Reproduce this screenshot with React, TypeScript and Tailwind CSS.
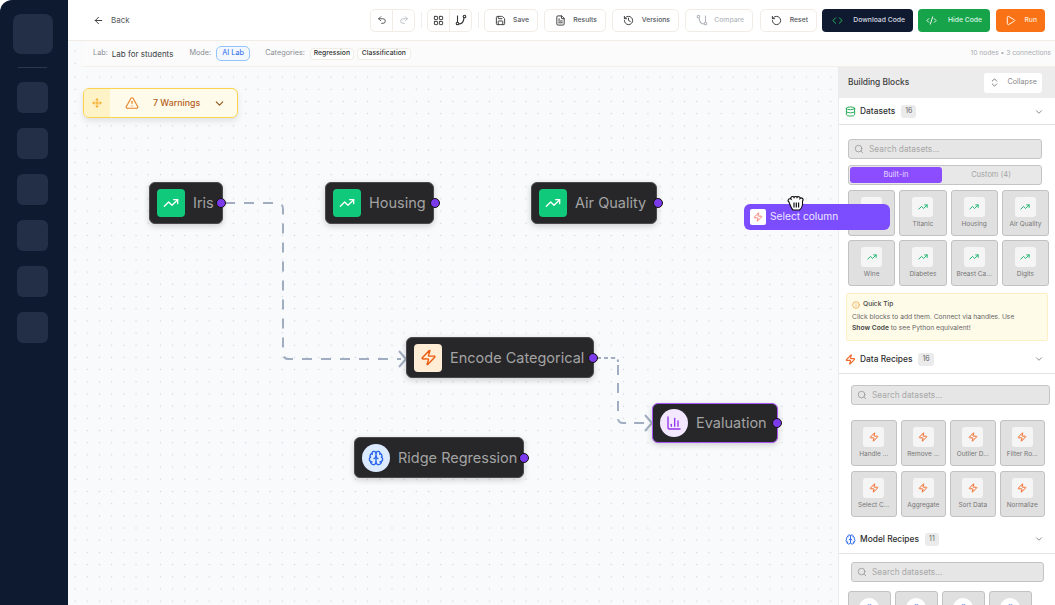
import {
  ArrowLeft, Brain, ChevronDown, ChevronsUpDown, ChartColumn, Code, CodeXml, Database, FileText,
  History, Info, LayoutGrid, Move, Play, Redo2, RotateCcw, Save, Search, TrendingUp, TriangleAlert, Undo2, Zap,
} from "lucide-react";
import type { ReactNode } from "react";

const FONT = "font-['Inter','Liberation_Sans',sans-serif]";
const DOTS = "bg-[#f9fafc] bg-[radial-gradient(#d3d6dc_0.7px,transparent_1px)] bg-[size:12.2px_12.2px] bg-[position:1px_4px]";

function ToolButton({ icon, label, className = "", muted = false }: { icon: ReactNode; label: string; className?: string; muted?: boolean }) {
  return (
    <button className={`h-[23px] flex items-center justify-between pl-[10px] pr-[8px] rounded-[5px] border border-[#f1ece6] bg-white text-[6.8px] font-medium ${muted ? "text-[#b5b8bd]" : "text-[#55585e]"} ${className}`}>
      {icon}
      <span>{label}</span>
    </button>
  );
}

function RouteIcon({ color, className = "" }: { color: string; className?: string }) {
  return (
    <svg width="12" height="12" viewBox="0 0 12 12" fill="none" stroke={color} strokeWidth="1.1" className={className}>
      <circle cx="9.5" cy="2.5" r="1.3" />
      <circle cx="2.5" cy="9.5" r="1.3" />
      <path d="M2.5 1.5 V8.2" />
      <path d="M3.8 10 Q8.5 10 9 3.9" />
    </svg>
  );
}

function Node({ icon, label, className, handle, selected = false }: { icon: ReactNode; label: string; className: string; handle: string; selected?: boolean }) {
  return (
    <div className={`absolute flex items-center gap-2 pl-[7px] rounded-md bg-[#272729] shadow-[0_2px_6px_rgba(0,0,0,0.18)] ${selected ? "border border-[#a855f7]" : "border border-[#4a4a4c]"} ${className}`}>
      {icon}
      <span className="mt-px text-[14.5px] leading-none text-[#a3a3a3] whitespace-nowrap">{label}</span>
      <span className={`absolute top-1/2 -translate-y-1/2 w-[10px] h-[10px] rounded-full bg-[#7c3aed] border border-[#111] ${handle}`} />
    </div>
  );
}

const greenIcon = (
  <span className="w-7 h-7 shrink-0 rounded bg-[#10c97a] flex items-center justify-center">
    <TrendingUp size={16} color="#fff" />
  </span>
);

function Card({ icon, label, hidden = false }: { icon: ReactNode; label: string; hidden?: boolean }) {
  return (
    <div className="h-[46px] rounded-[3px] border border-[#c2c2c2] bg-[#e0e0e0] flex flex-col items-center pt-[6px]">
      <span className="w-[21px] h-[20px] rounded-[3px] bg-[#f5f5f5] flex items-center justify-center">{icon}</span>
      {!hidden && <span className="mt-[2px] text-[6.5px] leading-[11px] text-[#777] whitespace-nowrap">{label}</span>}
    </div>
  );
}

function SearchBox({ className = "" }: { className?: string }) {
  return (
    <div className={`h-5 rounded-[3px] border border-[#c4c4c4] bg-[#e6e6e6] flex items-center gap-[5px] px-[5px] text-[8.3px] text-[#a8a8a8] ${className}`}>
      <Search size={10} color="#999" />
      Search datasets...
    </div>
  );
}

function SectionHead({ icon, label, count, className }: { icon: ReactNode; label: string; count: number; className: string }) {
  return (
    <div className={`flex items-center border-b border-[#e2e2e2] pt-px pl-[6px] pr-[11px] ${className}`}>
      {icon}
      <span className="ml-[4px] text-[8.4px] font-medium text-[#2e2e2e]">{label}</span>
      <span className="ml-[6px] px-[4px] h-[13px] min-w-[14px] flex items-center justify-center rounded-[3px] bg-[#ebebeb] text-[7px] text-[#666]">{count}</span>
      <ChevronDown size={10} color="#777" className="ml-auto" />
    </div>
  );
}

const trend = <TrendingUp size={10} color="#22b573" strokeWidth={2.4} />;
const bolt = <Zap size={10} color="#f26b2a" strokeWidth={2.4} />;

export default function App() {
  return (
    <div className={`h-screen w-full flex overflow-hidden bg-white ${FONT}`}>
      <aside className="w-[68px] shrink-0 bg-[#0e1a2f] rounded-tl-xl flex flex-col items-center pt-[14px] pr-[3px]">
        <div className="w-10 h-10 rounded-lg bg-[#232f46]" />
        <div className="w-[29px] h-px bg-[#2b374c] mt-[13px] mb-[14px]" />
        <div className="flex flex-col gap-[15px]">
          {[0, 1, 2, 3, 4, 5].map((i) => (
            <div key={i} className="w-[31px] h-[31px] rounded-md bg-[#232f46]" />
          ))}
        </div>
      </aside>

      <main className="flex-1 min-w-0 flex flex-col">
        <header className="h-[41px] shrink-0 border-b border-[#f1ece6] flex items-center pl-[25px] pr-[10px]">
          <ArrowLeft size={11} color="#333" />
          <span className="ml-[7px] text-[8px] text-[#55585e]">Back</span>
          <div className="ml-auto flex items-center gap-[6px]">
            <div className="h-[23px] flex rounded-[5px] border border-[#f1ece6]">
              <span className="w-[22px] flex items-center justify-center border-r border-[#f1ece6]"><Undo2 size={10} color="#444" /></span>
              <span className="w-[21px] flex items-center justify-center"><Redo2 size={10} color="#b5b8bd" /></span>
            </div>
            <div className="w-px h-4 bg-[#eeeeee] mx-[-0.5px]" />
            <div className="h-[23px] flex rounded-[5px] border border-[#f1ece6]">
              <span className="w-[22px] flex items-center justify-center border-r border-[#f1ece6]"><LayoutGrid size={11} color="#333" /></span>
              <span className="w-[21px] flex items-center justify-center"><RouteIcon color="#333" /></span>
            </div>
            <div className="w-px h-4 bg-[#eeeeee] mx-[-0.5px]" />
            <ToolButton icon={<Save size={11} color="#333" />} label="Save" className="w-[54px]" />
            <ToolButton icon={<FileText size={11} color="#333" />} label="Results" className="w-[62px]" />
            <ToolButton icon={<History size={11} color="#333" />} label="Versions" className="w-[67px]" />
            <ToolButton icon={<RouteIcon color="#b5b8bd" className="-scale-x-100" />} label="Compare" className="w-[68px]" muted />
            <ToolButton icon={<RotateCcw size={11} color="#333" />} label="Reset" className="w-[57px] ml-px" />
            <button className="w-[91px] h-[23px] -ml-px flex items-center justify-between pl-[10px] pr-[8px] rounded-[4px] bg-[#0f1a30] text-[6.8px] font-medium text-[#d7dbe2]">
              <Code size={11} color="#22c55e" /> Download Code
            </button>
            <button className="w-[72px] h-[23px] -ml-px flex items-center justify-between pl-[8px] pr-[8px] rounded-[4px] bg-[#16a34a] text-[6.8px] font-medium text-[#d7f5e2]">
              <CodeXml size={11} color="#fff" /> Hide Code
            </button>
            <button className="w-[49px] h-[23px] flex items-center justify-between pl-[9px] pr-[8px] rounded-[4px] bg-[#f97316] text-[6.8px] font-medium text-[#ffe9d6]">
              <Play size={11} color="#fff" /> Run
            </button>
          </div>
        </header>

        <div className={`h-[26px] shrink-0 ${DOTS}`}>
          <div className="h-full ml-[14px] pl-[11px] pr-1 flex items-center bg-[#fbfbfc] border-b border-[#f4efe9] text-[7.3px] text-[#8a8d92]">
            <span>Lab:</span>
            <span className="ml-[4px] text-[8px] text-[#3a3d42]">Lab for students</span>
            <span className="ml-4">Mode:</span>
            <span className="ml-[5px] w-[34px] h-[15px] flex items-center justify-center rounded-[5px] border border-[#93c5fd] bg-[#f3f8ff] text-[#2563eb]">AI Lab</span>
            <span className="ml-[15px]">Categories:</span>
            <span className="ml-[5px] w-[44px] h-[12px] flex items-center justify-center rounded-[4px] border border-[#f1ece6] bg-white text-[#333] font-medium text-[6.8px]">Regression</span>
            <span className="ml-[3px] w-[54px] h-[12px] flex items-center justify-center rounded-[4px] border border-[#f1ece6] bg-white text-[#333] font-medium text-[6.8px]">Classification</span>
            <span className="ml-auto text-[6.7px] text-[#a9acb1]">10 nodes • 3 connections</span>
          </div>
        </div>

        <div className="flex-1 min-h-0 flex relative">
          <section className={`relative w-[770px] shrink-0 ${DOTS}`}>
            <div className="absolute left-[15px] top-[21px] w-[155px] h-[30px] rounded-md border border-[#fcd34d] bg-[#fffbeb] shadow-[0_3px_6px_rgba(0,0,0,0.1)] flex items-center overflow-hidden">
              <span className="w-[26px] h-full bg-[#fef3c7] flex items-center justify-center"><Move size={10} color="#f59e0b" /></span>
              <TriangleAlert size={14} color="#e8842a" className="ml-[15px]" />
              <span className="ml-[14px] -mt-px text-[8.8px] font-medium text-[#b45f1b]">7 Warnings</span>
              <ChevronDown size={13} color="#92561c" className="ml-[13px]" />
            </div>

            <svg className="absolute inset-0 w-full h-full" fill="none" stroke="#a1aec1" strokeWidth="2">
              <path d="M157 136 H209 Q215 136 215 142 V286 Q215 292 221 292 H333" strokeDasharray="10 9" />
              <path d="M331 284 L338 292 L331 300" />
              <path d="M529 291 H546 Q550 291 550 295" strokeDasharray="4 3" />
              <path d="M550 298 V351 Q550 356 555 356 H581" strokeDasharray="10 8" />
              <path d="M577 348 L584 356 L577 364" />
            </svg>

            <Node className="left-[81px] top-[115px] w-[74px] h-[42px]" handle="-right-[3.5px]" icon={greenIcon} label="Iris" />
            <Node className="left-[257px] top-[115px] w-[109px] h-[42px]" handle="-right-[7.3px]" icon={greenIcon} label="Housing" />
            <Node className="left-[463px] top-[115px] w-[126px] h-[42px]" handle="-right-[7px]" icon={greenIcon} label="Air Quality" />
            <Node
              className="left-[338px] top-[270px] w-[188px] h-[41px]"
              handle="-right-[4.7px]"
              icon={<span className="w-7 h-7 shrink-0 rounded bg-[#ffedd5] flex items-center justify-center"><Zap size={17} color="#ea580c" /></span>}
              label="Encode Categorical"
            />
            <Node
              selected
              className="left-[584px] top-[336px] w-[126px] h-[40px]"
              handle="-right-[5.3px]"
              icon={<span className="w-7 h-7 shrink-0 rounded-full bg-[#f3e8ff] flex items-center justify-center"><ChartColumn size={16} color="#9333ea" /></span>}
              label="Evaluation"
            />
            <Node
              className="left-[286px] top-[370px] w-[170px] h-[41px]"
              handle="-right-[6px]"
              icon={<span className="w-7 h-7 shrink-0 rounded-full bg-[#dbeafe] flex items-center justify-center"><Brain size={16} color="#2563eb" /></span>}
              label="Ridge Regression"
            />
          </section>

          <aside className="w-[217px] shrink-0 bg-white border-l border-[#ececec] overflow-hidden">
            <div className="h-[31px] bg-[#ececec] flex items-center justify-between pl-[9px] pr-[13px]">
              <span className="text-[8.4px] font-medium text-[#3d3d3d]">Building Blocks</span>
              <span className="w-[58px] h-5 rounded-[3px] bg-white flex items-center justify-between pl-[5px] pr-[5px] text-[7.2px] text-[#8a8a8a]">
                <ChevronsUpDown size={11} color="#777" /> Collapse
              </span>
            </div>

            <SectionHead className="h-[27px]" icon={<Database size={11} color="#16a34a" />} label="Datasets" count={16} />
            <div className="pl-[9px] pr-[6px] pt-[14px]">
              <SearchBox className="w-[194px]" />
              <div className="w-[194px] h-5 mt-[6px] p-[1px] rounded-[3px] border border-[#c4c4c4] bg-[#e8e8e8] flex text-[7.5px]">
                <span className="w-[92px] rounded-[3px] bg-[#8b4dff] text-[#e9deff] flex items-center justify-center">Built-in</span>
                <span className="flex-1 text-[#a4a4a4] flex items-center justify-center">Custom (4)</span>
              </div>
              <div className="grid grid-cols-4 gap-x-[4px] gap-y-[4px] mt-[5px]">
                <Card icon={trend} label="Iris" hidden />
                {["Titanic", "Housing", "Air Quality", "Wine", "Diabetes", "Breast Ca...", "Digits"].map((n) => (
                  <Card key={n} icon={trend} label={n} />
                ))}
              </div>
            </div>

            <div className="mx-[7px] mt-[7px] h-[48px] rounded-[2px] border border-[#fdf0c4] bg-[#fffbe9] px-[5px] pt-[5px] text-[6.7px] leading-[11px] text-[#666]">
              <div className="flex items-center gap-[3px] text-[#444] font-medium">
                <Info size={8} color="#e8982a" /> Quick Tip
              </div>
              <p className="mt-[2px]">Click blocks to add them. Connect via handles. Use</p>
              <p><b className="font-semibold text-[#444]">Show Code</b> to see Python equivalent!</p>
            </div>

            <SectionHead className="h-[30px] mt-[3px]" icon={<Zap size={11} color="#f26b2a" strokeWidth={2.4} />} label="Data Recipes" count={16} />
            <div className="pl-[12px] pr-[5px] pt-[11px]">
              <SearchBox className="w-[199px]" />
              <div className="grid grid-cols-[repeat(4,45.5px)] gap-x-[4px] gap-y-[5px] mt-[15px]">
                {["Handle ...", "Remove ...", "Outlier D...", "Filter Ro...", "Select C...", "Aggregate", "Sort Data", "Normalize"].map((n) => (
                  <Card key={n} icon={bolt} label={n} />
                ))}
              </div>
            </div>

            <SectionHead className="h-[30px] mt-[7px]" icon={<Brain size={11} color="#2563eb" />} label="Model Recipes" count={11} />
            <div className="pl-[12px] pr-[5px] pt-[8px]">
              <SearchBox className="w-[193px]" />
              <div className="-ml-[3px] grid grid-cols-[repeat(4,42.5px)] gap-x-[4.5px] mt-[9px]">
                {[0, 1, 2, 3].map((i) => (
                  <div key={i} className="h-[46px] rounded-[3px] border border-[#c2c2c2] bg-[#e0e0e0] flex justify-center pt-[6px]">
                    <span className="w-5 h-5 rounded-full bg-white flex items-center justify-center"><Brain size={9} color="#2563eb" /></span>
                  </div>
                ))}
              </div>
            </div>
          </aside>

          <div className="absolute left-[676px] top-[137px] w-[146px] h-[26px] rounded-md bg-[#7c4dff] flex items-center pl-[6px] text-[10.2px] text-[#ece6ff]">
            <span className="w-4 h-4 rounded-[2px] bg-white flex items-center justify-center"><Zap size={10} color="#f26b5a" /></span>
            <span className="ml-[4px]">Select column</span>
          </div>
          <svg className="absolute left-[719px] top-[128px]" width="17" height="16" viewBox="0 0 17 16" fill="#fff" stroke="#111" strokeWidth="1.1">
            <path d="M2 7 A1.6 1.6 0 0 1 4 4 A1.6 1.6 0 0 1 7 2.5 A1.6 1.6 0 0 1 10 2.5 A1.6 1.6 0 0 1 13 3.5 A1.6 1.6 0 0 1 15.5 6 V10 Q15 13 12.5 15 H6 Q4 13 2 7 Z" />
            <path d="M7 7.5 V12.5 M9.3 7.5 V12.5 M11.6 7.5 V12.5" strokeWidth="1.2" />
          </svg>
        </div>
      </main>
    </div>
  );
}
